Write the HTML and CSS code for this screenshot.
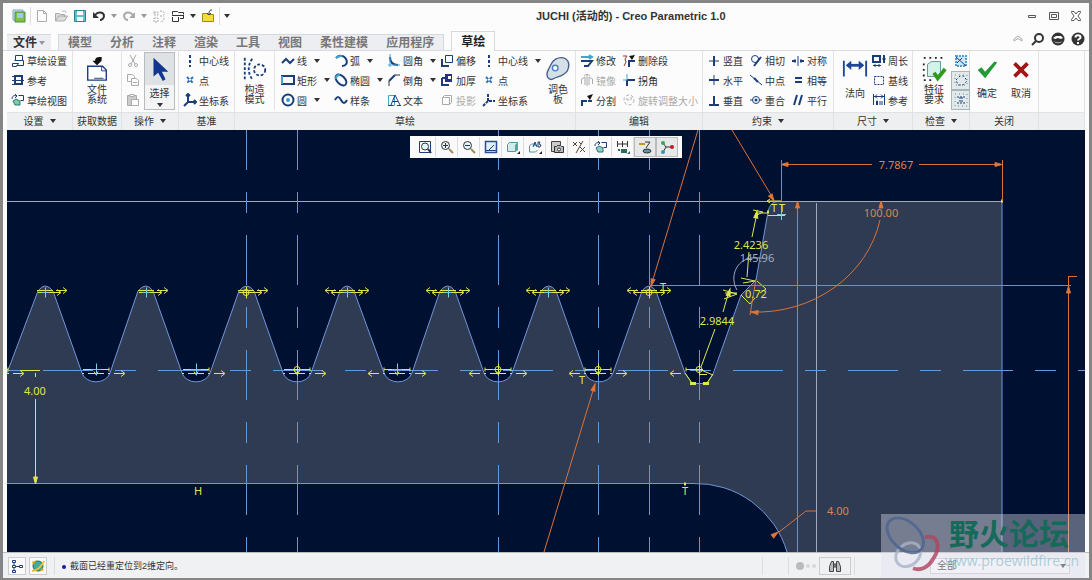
FILE: index.html
```html
<!DOCTYPE html>
<html lang="zh-CN">
<head>
  <meta charset="UTF-8">
  <meta name="viewport" content="width=device-width, initial-scale=1.0">
  <title>JUCHI (活动的) - Creo Parametric 1.0</title>
  <link rel="stylesheet" href="styles.css">
</head>
<body>
  <div class="window">
    <!-- Title bar -->
    <header class="titlebar">
      <div class="quick">
        <button aria-label="Creo"><svg class="ic" viewBox="0 0 14 14"><path fill="#cfe3f5" stroke="#7aa5cf" d="M1 1h10v10H1z"/><path fill="#7fc04a" stroke="#4d8f3a" d="M3 3h10v10H3z"/><path fill="#9fc8ea" d="M5 4h6v5H5z"/></svg></button>
        <i class="vline"></i>
        <button aria-label="新建"><svg class="ic" viewBox="0 0 14 14"><path class="g" d="M2.500 1.500h6l3 3v8h-9zM8.500 1.500v3h3"/></svg></button>
        <button aria-label="打开"><svg class="ic" viewBox="0 0 14 14"><path fill="#ddd" stroke="#aaa" d="M1.500 12V4.500h4l1 1h4V8M1.500 12l3-5h9l-3 5z"/><path class="g" d="M8 3c2-2 4-1 4 1"/></svg></button>
        <button aria-label="保存"><svg class="ic" viewBox="0 0 14 14"><path fill="#5fc0c8" stroke="#2b7f8c" d="M1.500 1.500h11v11h-11z"/><path fill="#fff" d="M4 2h6v4H4zM4 8h6v4H4z"/></svg></button>
        <button aria-label="撤消"><svg class="ic" viewBox="0 0 14 14"><path class="k w2" d="M3 6c3-4 9-3 9 1 0 2-2 4-4 4"/><path fill="#333" d="M1 3v6h6z"/></svg></button>
        <i class="arr dim"></i>
        <button aria-label="重做"><svg class="ic" viewBox="0 0 14 14"><path class="g w2" d="M11 6c-3-4-9-3-9 1 0 2 2 4 4 4"/><path fill="#aaa" d="M13 3v6H7z"/></svg></button>
        <i class="arr dim"></i>
        <button aria-label="重新生成"><svg class="ic" viewBox="0 0 14 14"><path class="g" stroke-dasharray="2 1" d="M2 3h4v3H2zM2 9h4v4H2zM8 2c4 0 5 2 4 4M12 9c0 3-2 4-4 4M8 7h4"/></svg></button>
        <button aria-label="窗口"><svg class="ic" viewBox="0 0 14 14"><path class="k" d="M1.500 5.500v-3h5l1 1h5v2M1 6.500h12M1.500 8v4.500h6V8M9 9.500h3.500V6"/></svg></button>
        <i class="arr"></i>
        <button aria-label="关闭窗口"><svg class="ic" viewBox="0 0 14 14"><path fill="#f3dc3c" stroke="#a08a10" d="M1.500 12.500v-8h4l1 1h6v7z"/><path stroke="#333" fill="none" d="M11 1C8 1 8 3 8 6M6 4l2 2 2-2"/></svg></button>
        <i class="vline"></i>
        <i class="arr more"></i>
      </div>
      <h1>JUCHI (活动的) - Creo Parametric 1.0</h1>
      <div class="winbtns">
        <button aria-label="最小化"><svg class="ic" viewBox="0 0 14 14"><path class="k thin" d="M3.500 6.500h7v2h-7z"/></svg></button>
        <button aria-label="最大化"><svg class="ic" viewBox="0 0 14 14"><path class="k thin" d="M2.500 3.500h9v7h-9zM4.500 5.500h5v3h-5z"/></svg></button>
        <button aria-label="关闭"><svg class="ic" viewBox="0 0 14 14"><path class="k thin" d="M2.500 2.500h2.500l2 2.500 2-2.500h2.500v1L9 7l2.500 3.500v1H9L7 9l-2 2.500H2.500v-1L5 7 2.500 3.500z"/></svg></button>
      </div>
    </header>

    <!-- Tabs -->
    <nav class="tabs">
      <button class="tab file">文件<i class="arr dim"></i></button>
      <div class="tabset">
        <button class="tab">模型</button>
        <button class="tab">分析</button>
        <button class="tab">注释</button>
        <button class="tab">渲染</button>
        <button class="tab">工具</button>
        <button class="tab">视图</button>
        <button class="tab">柔性建模</button>
        <button class="tab">应用程序</button>
      </div>
      <button class="tab active">草绘</button>
      <div class="help">
        <button aria-label="折叠"><svg class="ic" viewBox="0 0 14 14"><path class="g" d="M3 7l4-3 4 3v2L7 6.500 3 9z"/></svg></button>
        <button aria-label="搜索"><svg class="ic" viewBox="0 0 14 14"><circle class="k w2" cx="8" cy="6" r="4"/><path class="k w2" d="M5 9l-4 4"/></svg></button>
        <button aria-label="社区"><svg class="ic" viewBox="0 0 14 14"><circle cx="7" cy="7" r="6.500" fill="#333"/><path fill="#fff" d="M2 6l3-2h5l2 2-2 1-3-1-3 1zM3 9c3 2 5 2 8 0-2 3-6 3-8 0z"/></svg></button>
        <button aria-label="帮助"><svg class="ic" viewBox="0 0 14 14"><circle cx="7" cy="7" r="6.500" fill="#333"/><path stroke="#fff" stroke-width="2" fill="none" d="M4.500 5.500c0-3 5-3 5 0C9.500 7 7 7 7 8.500M7 10v2"/></svg></button>
      </div>
    </nav>

    <!-- Ribbon -->
    <div class="ribbon">
      <section class="group">
        <div class="body">
          <div class="col">
            <button class="item"><svg class="ic" viewBox="0 0 14 14"><path class="n" d="M4.500 1.500h7v5h-7zM3.500 6.500h9v5h-7M1.500 9.500h6l-2 3h-4z"/></svg>草绘设置</button>
            <button class="item"><svg class="ic" viewBox="0 0 14 14"><path class="n w2" d="M4 3h7v8H4z"/><path class="n" d="M1 7.500h12M1 3.500h3M1 11.500h3"/></svg>参考</button>
            <button class="item"><svg class="ic" viewBox="0 0 14 14"><path fill="#7fc8b0" stroke="#2b7f6c" d="M2 8l3-2 4 2v4H4z"/><path class="n" d="M7.500 2.500h5v5h-3M1 6c0-3 2-4 5-3M4 1l2 2-2 2"/></svg>草绘视图</button>
          </div>
        </div>
        <footer>设置<i class="arr"></i></footer>
      </section>

      <section class="group">
        <div class="body center">
          <button class="big"><svg class="bic" viewBox="0 0 28 28"><path stroke="#1c3e78" stroke-width="1.500" d="M4 11h16l4 4v11H4z" fill="#fff"/><path class="n" d="M19 11v5h5M11 24h10"/><path fill="#111" d="M9 5h10l-5 5zM12 5c0-4 3-4 7-4v4z"/></svg><span>文件<br>系统</span></button>
        </div>
        <footer>获取数据</footer>
      </section>

      <section class="group">
        <div class="body">
          <div class="col narrow">
            <button class="item" disabled aria-label="剪切"><svg class="ic" viewBox="0 0 14 14"><path class="g" d="M4 1l5 9M10 1L5 10"/><circle class="g" cx="4" cy="11" r="1.500"/><circle class="g" cx="10" cy="11" r="1.500"/></svg></button>
            <button class="item" disabled aria-label="复制"><svg class="ic" viewBox="0 0 14 14"><path class="g" d="M5 8.500H1.500v-7h5l2 2V5M5.500 5.500h5l2 2v5h-7zM7 9.500h4"/></svg></button>
            <button class="item" disabled aria-label="粘贴"><svg class="ic" viewBox="0 0 14 14"><path fill="#ccc" stroke="#aaa" d="M1.500 2.500h9v10h-9z"/><path fill="#fff" stroke="#aaa" d="M4 1.500h4v2H4zM5.500 6.500h7v6h-7z"/></svg></button>
          </div>
          <button class="big pressed"><svg class="bic" viewBox="0 0 28 28"><path fill="#12358f" d="M7 2v20l5-4 5 9 3-2-4-8h7z"/></svg><span>选择</span><i class="arr"></i></button>
        </div>
        <footer>操作<i class="arr"></i></footer>
      </section>

      <section class="group">
        <div class="body">
          <div class="col">
            <button class="item"><svg class="ic" viewBox="0 0 14 14"><path class="n w2" stroke-dasharray="3 2" d="M7 1v12"/></svg>中心线</button>
            <button class="item"><svg class="ic" viewBox="0 0 14 14"><path class="b w2" stroke-dasharray="3 2" d="M4 4l6 6M10 4l-6 6"/></svg>点</button>
            <button class="item"><svg class="ic" viewBox="0 0 14 14"><path class="n w2" d="M5 1v8h8M5 9l-4 4M3 3l2-2 2 2M11 7l2 2-2 2"/></svg>坐标系</button>
          </div>
        </div>
        <footer>基准</footer>
      </section>

      <section class="group">
        <div class="body">
          <button class="big ruled"><svg class="bic" viewBox="0 0 28 28"><path class="n w2" stroke-dasharray="3 2" d="M3 2v25M11 3c-5 7-5 15 0 22"/><circle class="n w2" stroke-dasharray="3 2" cx="19" cy="15" r="6"/></svg><span>构造<br>模式</span></button>
          <div class="col mid">
            <button class="item"><svg class="ic" viewBox="0 0 14 14"><path class="n w2" d="M1 9l4-4 4 4 4-4"/></svg>线<i class="arr"></i></button>
            <button class="item"><svg class="ic" viewBox="0 0 14 14"><path class="n w2" d="M1 3h12v8H1z"/><path class="c w2" d="M1 11V3"/></svg>矩形<i class="arr"></i></button>
            <button class="item"><svg class="ic" viewBox="0 0 14 14"><circle class="n w2" cx="7" cy="7" r="5.500"/><circle fill="#3aa0c8" cx="7" cy="7" r="2"/></svg>圆<i class="arr"></i></button>
          </div>
          <div class="col mid">
            <button class="item"><svg class="ic" viewBox="0 0 14 14"><path class="n w2" d="M2 4c3-3 8-3 10 1s0 7-4 7"/><path class="c w2" d="M2 4c2-2 4-2 6-2"/></svg>弧<i class="arr"></i></button>
            <button class="item"><svg class="ic" viewBox="0 0 14 14"><ellipse class="n w2" cx="7" cy="7" rx="6.500" ry="4" transform="rotate(45 7 7)"/><path class="c w2" d="M2 6c0-3 1-4 4-4"/></svg>椭圆<i class="arr"></i></button>
            <button class="item"><svg class="ic" viewBox="0 0 14 14"><path class="n w2" d="M1 7c2-4 4-4 6 0s4 4 6 0"/></svg>样条</button>
          </div>
          <div class="col mid">
            <button class="item"><svg class="ic" viewBox="0 0 14 14"><path class="n w2" d="M3 3c0 5 3 8 8 8"/><path class="c" d="M3 0v13M1 11h12"/></svg>圆角<i class="arr"></i></button>
            <button class="item"><svg class="ic" viewBox="0 0 14 14"><path class="n w2" d="M2 8l6-6"/><path class="k" d="M2 13V8M8 2h5"/></svg>倒角<i class="arr"></i></button>
            <button class="item"><svg class="ic" viewBox="0 0 14 14"><path class="c" d="M1.500 2.500h6v10h-6z"/><path class="n" d="M4 12L8 2l5 10M6 8.500h5M1 12.500h5M10 12.500h4"/></svg>文本</button>
          </div>
          <div class="col">
            <button class="item"><svg class="ic" viewBox="0 0 14 14"><path class="n w2" d="M2 5v7h7"/><path class="n" d="M5.500 1.500h7v7h-7z"/></svg>偏移</button>
            <button class="item"><svg class="ic" viewBox="0 0 14 14"><path class="n w2" d="M2 5v7h7M2 5h3"/><path fill="#2a2f80" d="M5 1h7v8H5z"/><path fill="#fff" d="M8 3h3v3H8z"/></svg>加厚</button>
            <button class="item" disabled><svg class="ic" viewBox="0 0 14 14"><path class="g" d="M2.500 4.500h7v7h-7zM2.500 4.500l2-2h7v7l-2 2"/></svg>投影</button>
          </div>
          <div class="col grow">
            <button class="item"><svg class="ic" viewBox="0 0 14 14"><path class="n w2" stroke-dasharray="3 2" d="M7 1v12"/></svg>中心线<i class="arr"></i></button>
            <button class="item"><svg class="ic" viewBox="0 0 14 14"><path class="b w2" stroke-dasharray="3 2" d="M4 4l6 6M10 4l-6 6"/></svg>点</button>
            <button class="item"><svg class="ic" viewBox="0 0 14 14"><path class="n w2" stroke-dasharray="3 1" d="M6 1v7h7M6 8l-5 5"/></svg>坐标系</button>
          </div>
          <button class="big"><svg class="bic" viewBox="0 0 28 28"><path fill="#d5dfe6" stroke="#46618c" stroke-width="1.500" d="M3 23C0 18 4 15 6 10 8 4 14 1 20 2c6 2 7 8 4 14-3 5-9 6-14 8-3 2-5 2-7-1z"/><circle fill="#fff" stroke="#4a80c0" stroke-width="1.500" cx="11" cy="13" r="3"/></svg><span>调色<br>板</span></button>
        </div>
        <footer>草绘</footer>
      </section>

      <section class="group">
        <div class="body">
          <div class="col">
            <button class="item"><svg class="ic" viewBox="0 0 14 14"><path class="n w2" d="M1 7h11L8 12H4"/><path class="c w2" d="M1 3h10M9 1l3 2-3 2"/></svg>修改</button>
            <button class="item" disabled><svg class="ic" viewBox="0 0 14 14"><path class="g" d="M5 12V4L1.500 6v5M9 12V4l3.500 2v5M7 1v12M4 3c1-2 5-2 6 0"/></svg>镜像</button>
            <button class="item"><svg class="ic" viewBox="0 0 14 14"><path class="n w2" d="M2 13V8h5M8 8h4"/><path fill="#111" d="M13 1L7 3l3 4z"/></svg>分割</button>
          </div>
          <div class="col grow">
            <button class="item"><svg class="ic" viewBox="0 0 14 14"><path stroke="#a03030" fill="none" d="M1 2h4L3 5l1 3-2 4"/><path class="n w2" d="M7 13V7h6"/><path fill="#111" d="M13 1L7 2l3 4z"/></svg>删除段</button>
            <button class="item"><svg class="ic" viewBox="0 0 14 14"><path class="n w2" d="M5 7h8M5 7v6"/><path class="c" d="M5 1v6M1 7h4"/></svg>拐角</button>
            <button class="item" disabled><svg class="ic" viewBox="0 0 14 14"><circle class="g" stroke-dasharray="3 2" cx="7" cy="7" r="5"/><path class="g" d="M4 6h2v2M9 4v3"/></svg>旋转调整大小</button>
          </div>
        </div>
        <footer>编辑</footer>
      </section>

      <section class="group">
        <div class="body">
          <div class="col">
            <button class="item"><svg class="ic" viewBox="0 0 14 14"><path class="n" d="M2 7h10"/><path class="n w2" d="M7 2v10"/></svg>竖直</button>
            <button class="item"><svg class="ic" viewBox="0 0 14 14"><path class="n w2" d="M2 7h10"/><path class="n" d="M7 2v10"/></svg>水平</button>
            <button class="item"><svg class="ic" viewBox="0 0 14 14"><path class="n w2" d="M2 12h10M7 3v9"/></svg>垂直</button>
          </div>
          <div class="col">
            <button class="item"><svg class="ic" viewBox="0 0 14 14"><circle class="n" cx="6" cy="5" r="3.500"/><path class="n w2" d="M5 12l7-9"/></svg>相切</button>
            <button class="item"><svg class="ic" viewBox="0 0 14 14"><path class="n" d="M1 2l12 10"/><path class="n w2" d="M5 5l4 4"/></svg>中点</button>
            <button class="item"><svg class="ic" viewBox="0 0 14 14"><circle class="n" cx="7" cy="7" r="3.500"/><path class="n" d="M1 7h3M10 7h3"/><circle cx="7" cy="7" r="1.500" fill="#1c3e78"/></svg>重合</button>
          </div>
          <div class="col">
            <button class="item"><svg class="ic" viewBox="0 0 14 14"><path class="n w2" d="M1 7h4M9 7h4"/><path class="n" d="M7 2v10M4 5v4M10 5v4"/></svg>对称</button>
            <button class="item"><svg class="ic" viewBox="0 0 14 14"><path class="n w2" d="M4 5h7M4 9h7"/></svg>相等</button>
            <button class="item"><svg class="ic" viewBox="0 0 14 14"><path class="n w2" d="M6 2L3 12M11 2L8 12"/></svg>平行</button>
          </div>
        </div>
        <footer>约束<i class="arr"></i></footer>
      </section>

      <section class="group">
        <div class="body">
          <button class="big"><svg class="bic" viewBox="0 0 28 28"><path stroke="#1d4796" stroke-width="2" fill="none" d="M2 5v17M26 5v17"/><path stroke="#1d4796" stroke-width="3" d="M6 10h16"/><path fill="#1d4796" d="M4 10l6-5v10zM24 10l-6-5v10z"/></svg><span>法向</span></button>
          <div class="col grow">
            <button class="item"><svg class="ic" viewBox="0 0 14 14"><path class="n w2" d="M1 2h7v6H1zM12 1v8"/><path class="n" d="M10 5h4M1 11.500h8M3 10v3M7 10v3"/></svg>周长</button>
            <button class="item"><svg class="ic" viewBox="0 0 14 14"><path class="n" stroke-dasharray="2 1" d="M2.500 3.500h9v8h-9z"/></svg>基线</button>
            <button class="item"><svg class="ic" viewBox="0 0 14 14"><path class="n" d="M1.500 1v11M12.500 1v11M2 3.500h10M5 1.500L3 3.500l2 2M9 1.500l2 2-2 2M4.500 12V8h1v4M8 8v4M10 8v4"/></svg>参考</button>
          </div>
        </div>
        <footer>尺寸<i class="arr"></i></footer>
      </section>

      <section class="group">
        <div class="body">
          <button class="big"><svg class="bic" viewBox="0 0 28 28"><path stroke="#222" stroke-width="2" stroke-dasharray="2 4" fill="none" d="M3 2h22M3 8v18h8"/><path fill="#d6f0ea" stroke="#57958f" d="M7 9l4-3h10v12l-4 4H7z"/><path stroke="#2d9a1c" stroke-width="4" fill="none" d="M14 18l4 6 8-10"/></svg><span>特征<br>要求</span></button>
          <div class="col checks">
            <button aria-label="重叠几何"><svg class="ic" viewBox="0 0 14 14"><path stroke="#5a9ccc" stroke-width="2" stroke-dasharray="2 1" fill="#cfe6f5" d="M2 2h10v10H2z"/><path class="n" d="M2 3l10 9M3 9l5-5"/></svg></button>
            <button class="on" aria-label="突出显示开放端"><svg class="ic" viewBox="0 0 14 14"><path class="n" stroke-dasharray="2 2" d="M2 7l4-4h4l3 5-4 4H4z"/><path stroke="#4aa060" stroke-dasharray="1 3" fill="none" d="M1 2h12v10H1z"/></svg></button>
            <button class="on" aria-label="着色封闭环"><svg class="ic" viewBox="0 0 14 14"><path class="n" stroke-dasharray="2 1" d="M3 4h8M3 10h8M6 4v6M8 4v6"/><path stroke="#4aa060" stroke-dasharray="1 3" fill="none" d="M1 1h12v12H1z"/></svg></button>
          </div>
        </div>
        <footer>检查<i class="arr"></i></footer>
      </section>

      <section class="group">
        <div class="body center">
          <button class="big"><svg class="bic" viewBox="0 0 28 28"><path fill="#219a35" d="M4 15l4-3 4 5L22 6l3 1-13 17z"/></svg><span>确定</span></button>
          <button class="big"><svg class="bic" viewBox="0 0 28 28"><path stroke="#a31515" stroke-width="4" fill="none" d="M7 8l14 14M21 8L7 22"/></svg><span>取消</span></button>
        </div>
        <footer>关闭</footer>
      </section>

      <section class="group">
        <div class="body"></div>
        <footer></footer>
      </section>
    </div>

    <!-- Drawing area -->
    <main class="canvas">
      <svg class="sketch" viewBox="7 130 1078 422" preserveAspectRatio="xMinYMin slice">
        <defs>
          <!-- right and left pointing constraint arrows -->
          <g id="ar"><path d="M0 0h10M7 -3l4 3-4 3"/></g>
          <g id="al"><path d="M0 0h-10M-7 -3l-4 3 4 3"/></g>
          <g id="peak"><path d="M-7 0H7M-7 2H7"/><path class="cross" d="M.5-3v10M-4 2H4"/><use href="#ar" x="11"/><use href="#ar" x="5" y="2"/><path class="dots" d="M-8 0h2M6 0h2"/></g>
          <g id="peak-left"><use href="#al" x="-11"/><use href="#al" x="-5" y="2"/></g>
          <g id="valley"><path d="M-13 0h26M-8 4H8M-2 2l2 3 2-3M13-2v4"/><path class="cross" d="M.5-6v12M-5 0H5"/><use href="#ar" x="18" y="4"/><path class="dots" d="M-14 4h2M12 4h2"/></g>
          <g id="valley-left"><use href="#al" x="-18" y="4"/><path d="M-13-2v4"/></g>
          <g id="ring"><circle r="3"/><path d="M.5-6v12M-4 0h8"/></g>
          <path id="head" d="M0 0l-2 7h4z"/>
        </defs>

        <!-- closed section -->
        <path class="section" d="M0 392L7 373L38 291Q45 281 53 291L82 373A14.500 12 0 0 0 110 373L138 291Q146 281 153 291L182 373A14.500 12 0 0 0 210 373L239 291Q247 281 254 291L283 373A14.500 12 0 0 0 311 373L340 291Q347 281 354 291L384 373A14.500 12 0 0 0 412 373L440 291Q448 281 455 291L484 373A14.500 12 0 0 0 512 373L541 291Q549 281 556 291L585 373A14.500 12 0 0 0 613 373L642 291Q649 281 656 291L685 373L692 383.500H707L713 374L741 295L756 280L768 212Q770 202 777 201.500H1002V570H792L787 552A95 95 0 0 0 693 483.500H0z"/>
        <path class="datum" d="M7 201.500H1002M816.500 203V552"/>

        <!-- centre lines -->
        <g class="centre">
          <path d="M246.500 120V552M297.500 120V552M498.500 120V552M598.500 120V552M649.500 120V552M699.500 120V552"/>
          <path d="M-72 370.500H1085"/>
        </g>

        <!-- constraints -->
        <g class="yellow">
          <use href="#peak" x="45" y="290.500"/><use href="#peak" x="146" y="290.500"/><use href="#peak" x="246" y="290.500"/><use href="#peak" x="347" y="290.500"/><use href="#peak" x="448" y="290.500"/><use href="#peak" x="548" y="290.500"/><use href="#peak" x="649" y="290.500"/>
          <use href="#peak-left" x="347" y="290.500"/><use href="#peak-left" x="448" y="290.500"/><use href="#peak-left" x="548" y="290.500"/><use href="#peak-left" x="649" y="290.500"/>
          <use href="#valley" x="-5" y="369.500"/><use href="#valley" x="96" y="369.500"/><use href="#valley" x="196" y="369.500"/><use href="#valley" x="297" y="369.500"/><use href="#valley" x="397" y="369.500"/><use href="#valley" x="498" y="369.500"/><use href="#valley" x="598" y="369.500"/>
          <use href="#valley-left" x="397" y="369.500"/><use href="#valley-left" x="498" y="369.500"/><use href="#valley-left" x="598" y="369.500"/><use href="#valley-left" x="699" y="369.500"/>
          <use href="#ring" x="246" y="292.500"/><use href="#ring" x="649" y="292.500"/><use href="#ring" x="297" y="369.500"/><use href="#ring" x="498" y="369.500"/><use href="#ring" x="598" y="369.500"/><use href="#ring" x="699" y="369.500"/>
          <path d="M686 369.500h14M699 374.500h8M685 373l7 10M713 374l-6 9M701 370l12 5"/>
          <path class="dots" d="M690 383.500h6M703 383.500h6"/>
          <!-- 4.00 height -->
          <path d="M21 370.500h19M35.500 373v4M35.500 399v84"/>
          <use class="tip" href="#head" transform="translate(35.500 484) rotate(180)"/>
          <!-- slanted lengths -->
          <path d="M701 367l14-38M723 312l6-21M723 290l14 4-13 5M725 293h12"/>
          <path d="M757 213l-5 24M749 252l-2 25M753 210l10 2-8 4M757 213h10M741 278l14 3-12 2"/>
          <path d="M741 295l9 9 5-6M757 281l9 8-6 4M768 215.500h17"/>
          <path d="M768 201h14M770 199l-3 2 3 2"/>
          <use class="tip" href="#head" transform="translate(730 289) rotate(15)"/>
          <use class="tip" href="#head" transform="translate(757 211) rotate(10)"/>
          <path class="dots" d="M684 484h2M1001 201h2M767 212h2"/>
        </g>
        <path class="cyan" d="M781.500 205v15M777 214.500h9"/>

        <!-- dimensions -->
        <g class="orange">
          <path d="M698 130L651 286M732 130l42 70M544 552l51-168"/>
          <path d="M781.500 160v40M1002.500 160v41M782 164.500h90M919 164.500h83"/>
          <path d="M650 285.500h421M797.500 201v351M1068.500 276v276M1068 276.500h9"/>
          <path d="M881 202v6M880 220A126 115 0 0 1 751 312M756 279l-6 36"/>
          <path d="M779 532l27-21h10"/>
          <use class="tip" href="#head" transform="translate(651 286) rotate(197)"/>
          <use class="tip" href="#head" transform="translate(774 201) rotate(149)"/>
          <use class="tip" href="#head" transform="translate(595 384) rotate(17)"/>
          <use class="tip" href="#head" transform="translate(781 164.500) rotate(270)"/>
          <use class="tip" href="#head" transform="translate(1002 164.500) rotate(90)"/>
          <use class="tip" href="#head" x="797.500" y="201"/>
          <use class="tip" href="#head" x="881" y="201"/>
          <use class="tip" href="#head" x="1068.500" y="286"/>
          <use class="tip" href="#head" transform="translate(751 312) rotate(275)"/>
          <use class="tip" href="#head" transform="translate(778 532) rotate(52)"/>
        </g>
        <path class="ref" d="M763 258h-12C737 260 729 276 737 290M816.500 203v6"/>

        <g class="dims">
          <text x="35" y="395">4.00</text>
          <text x="198" y="495">H</text>
          <text x="685" y="495">T</text>
          <text x="582" y="384">T</text>
          <text x="663" y="291">T</text>
          <text x="774" y="212">T</text>
          <text x="782" y="212">T</text>
          <text x="717" y="325">2.9844</text>
          <text x="751" y="249">2.4236</text>
          <text x="756" y="298">0.72</text>
          <text class="t-ref" x="757" y="262">145.96</text>
          <text class="t-orange" x="896" y="169">7.7867</text>
          <text class="t-orange" x="881" y="217">100.00</text>
          <text class="t-orange" x="838" y="515">4.00</text>
        </g>
      </svg>

      <div class="viewbar">
        <button aria-label="重新调整"><svg class="ic" viewBox="0 0 14 14"><path class="n" d="M1.500 1.500h11v11h-11z"/><circle stroke="#333" fill="#dff" cx="7" cy="6.500" r="3.500"/><path class="k w2" d="M10 9l3 4"/></svg></button>
        <button aria-label="放大"><svg class="ic" viewBox="0 0 14 14"><circle stroke="#333" fill="#e4f4ff" cx="5.500" cy="5.500" r="4"/><path stroke="#a08a50" stroke-width="2" d="M9 9l4 4"/><path class="k" d="M3 5.500h5M5.500 3v5"/></svg></button>
        <button aria-label="缩小"><svg class="ic" viewBox="0 0 14 14"><circle stroke="#333" fill="#e4f4ff" cx="5.500" cy="5.500" r="4"/><path stroke="#a08a50" stroke-width="2" d="M9 9l4 4"/><path class="k" d="M3 5.500h5"/></svg></button>
        <button aria-label="重画"><svg class="ic" viewBox="0 0 14 14"><path stroke="#2a4f98" fill="#dfeeff" stroke-width="1.500" d="M1.500 1.500h11v11h-11z"/><path class="n" d="M2 10.500h10M10 5l-5 5"/></svg></button>
        <button aria-label="显示样式"><svg class="ic" viewBox="0 0 14 14"><path fill="#cdeeea" stroke="#4f9a96" d="M1.500 4.500l2-2h8v7l-2 2h-8z"/><path fill="#4fa9a0" d="M9 5l3-3v8l-3 2z"/><path fill="#222" d="M14 11v3h-3z"/></svg></button>
        <button aria-label="已保存方向"><svg class="ic" viewBox="0 0 14 14"><path stroke="#4f9a96" fill="none" d="M1.500 6l2-2h3M1.500 6v6h6l2-2"/><path class="n" d="M5 7l2-5 2 5M6 5h2M10 7V2h2l-1 2 2 1-1 2z"/><path fill="#222" d="M14 11v3h-3z"/></svg></button>
        <button aria-label="视图管理器"><svg class="ic" viewBox="0 0 14 14"><path stroke="#444" fill="#ccc" d="M1.500 1.500h9v10h-9z"/><path stroke="#333" fill="#bbb" d="M4.500 6.500h2l1-1h3l1 1h2v6h-9z"/><circle stroke="#333" fill="#fff" cx="9" cy="9.500" r="1.500"/></svg></button>
        <button aria-label="基准显示"><svg class="ic" viewBox="0 0 14 14"><path stroke="#5a4330" fill="none" d="M1 2l4 4M5 2L1 6M11 1L4 13M8 7l5 5M13 7l-5 5M7 2l2 2"/></svg></button>
        <button aria-label="草绘视图"><svg class="ic" viewBox="0 0 14 14"><path fill="#8fd0c0" stroke="#2b6f7c" d="M2 8l3-2 4 2v4H4z"/><path class="n" d="M7.500 2.500h5v5h-3M1 6c0-3 2-4 5-3M4 1l2 2-2 2"/></svg></button>
        <button aria-label="草绘器显示"><svg class="ic" viewBox="0 0 14 14"><path class="k" d="M1.500 1v6M6.500 1v6M11.500 1v6M2 4h9"/><path fill="#2c6a60" d="M5 9h6v4H5zM2 9h2v2H2zM14 11v3h-3z"/></svg></button>
        <button class="on" aria-label="注释显示"><svg class="ic" viewBox="0 0 14 14"><path stroke="#c09a20" stroke-width="2" fill="none" d="M1 4h6"/><path class="k" d="M7 2h5L8 8"/><ellipse fill="#5a9a98" stroke="#333" cx="9" cy="11" rx="4" ry="2"/></svg></button>
        <button class="on" aria-label="旋转中心"><svg class="ic" viewBox="0 0 14 14"><path class="k" d="M3 3l3 4M6 7h6M6 7l-3 5"/><circle fill="#2fae4a" cx="3" cy="3" r="2"/><circle fill="#c21818" cx="12" cy="7" r="2"/><circle fill="#2f9aae" cx="3" cy="12" r="2"/></svg></button>
      </div>
    </main>

    <!-- Status bar -->
    <footer class="status">
      <button class="sbtn" aria-label="导航器"><svg class="ic" viewBox="0 0 14 14"><path class="n" d="M2.500 1.500h3v2h-3zM2.500 6.500h3v2h-3zM2.500 11.500h3v2h-3zM9.500 6.500h3v2h-3zM4 3v3M4 9v2M6 7.500h3"/></svg></button>
      <button class="sbtn" aria-label="浏览器"><svg class="ic" viewBox="0 0 14 14"><circle fill="#3fae9e" stroke="#1f6f5e" cx="7" cy="7" r="5"/><path fill="#e0a51c" d="M1 3l5-2-4 5zM13 11l-5 2 3-4z"/><path stroke="#f0c030" stroke-width="2" fill="none" d="M1 12c5 0 10-5 12-10"/></svg></button>
      <i class="vline"></i>
      <p class="msg">截面已经重定位到2维定向。</p>
      <i class="vline"></i>
      <i class="vline gap"></i>
      <svg class="lamp" viewBox="0 0 20 10"><circle fill="#bbb" cx="4" cy="5" r="4"/><circle fill="#d8d8d8" cx="12" cy="5" r="2"/><circle fill="#d8d8d8" cx="18" cy="5" r="2"/></svg>
      <button class="find" aria-label="查找"><svg class="ic" viewBox="0 0 14 14"><path fill="#bbb" stroke="#444" d="M1.500 12.500v-5l2-5h2v10zM8.500 12.500v-10h2l2 5v5zM6 5h2v3H6z"/></svg></button>
      <i class="vline"></i>
      <div class="filter">
        <select aria-label="选择过滤器"><option>全部</option></select>
        <i class="arr"></i>
      </div>
    </footer>

    <div class="mark">
      <svg class="logo" viewBox="0 0 62 62"><g fill="none"><ellipse stroke="#a9b3c8" stroke-width="3" cx="25" cy="41" rx="11" ry="14" transform="rotate(50 25 41)"/><ellipse stroke="#4c6590" stroke-width="3" cx="22" cy="21" rx="22" ry="14" transform="rotate(42 22 21)"/><path stroke="#b04560" stroke-width="4" d="M42 23c14-4 17 10 9 22-5 9-13 13-21 10"/></g></svg>
      <div class="words"><strong>野火论坛</strong><span>www.proewildfire.cn</span></div>
    </div>
  </div>
</body>
</html>
```
FILE: styles.css
```css
* {
  box-sizing: border-box;
}

body {
  margin: 0;
  background: #858585;
  font-family: "Liberation Sans", "Noto Sans CJK SC", sans-serif;
  font-size: 10px;
  color: #333;
}

.window {
  position: relative;
  display: flex;
  flex-direction: column;
  height: 100vh;
  border: solid #858585;
  border-width: 3px 3px 2px 3px;
  background: #fcfcfd;
}

button {
  display: flex;
  align-items: center;
  justify-content: center;
  margin: 0;
  padding: 0;
  border: 0;
  background: none;
  font: inherit;
  color: inherit;
  white-space: nowrap;
}

button:disabled {
  color: #aaa;
}

/* Icons */
.ic {
  width: 14px;
  height: 14px;
  flex: none;
}

.bic {
  width: 26px;
  height: 28px;
  flex: none;
}

.n, .k, .g, .c, .b {
  fill: none;
  stroke-width: 1;
}

.n { stroke: #1c3e78; }
.k { stroke: #333; }
.g { stroke: #aaa; }
.c { stroke: #45a5c8; }
.b { stroke: #2a6fb0; }
.w2 { stroke-width: 2; }
.thin { stroke: #555; }

.arr {
  flex: none;
  border: 3px solid transparent;
  border-top: 4px solid #333;
  border-bottom: 0;
  margin-left: 6px;
}

.arr.dim {
  border-top-color: #999;
  margin-left: 2px;
}

.vline {
  width: 1px;
  height: 18px;
  background: #ddd;
}

/* Title bar */
.titlebar {
  display: flex;
  align-items: center;
  height: 28px;
  flex: none;
  padding: 0 6px 2px 9px;
}

.quick {
  display: flex;
  align-items: center;
  gap: 5px;
}

.quick .arr {
  margin-left: 0;
}

.quick .vline {
  margin: 0 -1px;
}

.titlebar h1 {
  flex: 1;
  margin: 0;
  font-size: 11px;
  line-height: 16px;
  padding-left: 306px;
  white-space: nowrap;
}

.winbtns {
  display: flex;
  gap: 8px;
}

/* Tabs */
.tabs {
  display: flex;
  align-items: flex-end;
  height: 20px;
  flex: none;
  padding: 0 4px;
  border-bottom: 1px solid #d9dbde;
}

.tabset {
  display: flex;
  margin: 0 7px;
  border: solid #d5d8dc;
  border-width: 0 1px;
}

.tab {
  height: 16px;
  padding: 0 9px;
  border-top: 1px solid #d5d8dc;
  background: #eceef1;
  font-size: 12px;
  font-weight: bold;
  line-height: 14px;
  color: #777;
}

.tab.file {
  padding: 0 6px;
  color: #333;
}

.tab.active {
  height: 20px;
  margin-bottom: -1px;
  border: 1px solid #d5d8dc;
  border-bottom: 0;
  background: #fcfcfd;
  color: #222;
}

.help {
  display: flex;
  gap: 6px;
  margin-left: auto;
  padding-bottom: 4px;
}

/* Ribbon */
.ribbon {
  display: grid;
  grid-template-columns: 66fr 49fr 57fr 56fr 341fr 127fr 131fr 79fr 57fr 69fr 46fr;
  height: 79px;
  flex: none;
  margin: 0 4px;
}

.group {
  display: flex;
  flex-direction: column;
  min-width: 0;
  border-right: 1px solid #e0e2e5;
}

.group .body {
  display: flex;
  flex: 1;
  padding: 0 3px 2px 4px;
}

.group .body.center {
  justify-content: center;
  padding: 0;
}

.group footer {
  display: flex;
  align-items: center;
  justify-content: center;
  height: 18px;
  padding-bottom: 2px;
  background: #edeff1;
  border-top: 1px solid #e0e2e5;
}

.col {
  display: grid;
  grid-template-rows: repeat(3, 1fr);
  width: 42px;
  flex: none;
}

.col.mid {
  width: 53px;
}

.col.narrow {
  width: 18px;
}

.col.grow {
  flex: 1;
  width: auto;
}

.item {
  justify-content: flex-start;
  gap: 2px;
}

.item .arr {
  margin-left: 5px;
}

.big {
  flex-direction: column;
  justify-content: flex-start;
  width: 34px;
  flex: none;
  padding-top: 4px;
  line-height: 10px;
}

.big span {
  display: flex;
  align-items: center;
  min-height: 20px;
  padding-top: 2px;
}

.big.pressed {
  height: 58px;
  width: 31px;
  margin-top: 1px;
  padding-top: 2px;
  border: 1px solid #bbb;
  background: linear-gradient(#dfe2e5 0, #dfe2e5 32px, #f3f4f5 32px);
}

.big.pressed .arr {
  margin-left: 0;
}

.big.ruled {
  width: 40px;
  margin-left: -4px;
  margin-right: 6px;
  border-right: 1px solid #e4e4e4;
}

.checks {
  width: 19px;
}

.checks .on {
  border: 1px solid #aab4bd;
  background: #e3e8ec;
}

/* Drawing area */
.canvas {
  position: relative;
  flex: 1;
  min-height: 0;
  margin: 0 4px;
  background: #001030;
  overflow: hidden;
}

.sketch {
  display: block;
  width: 100%;
  height: 100%;
}

.section {
  fill: #2f3b52;
  stroke: #6f97da;
}

.datum, .centre, .ref, .cyan {
  fill: none;
}

.datum, .ref {
  stroke: #a3a9bd;
}

.centre {
  stroke: #6498d8;
  stroke-dasharray: 50 22 21 22;
}

.cyan, .cross {
  stroke: #7ccbe0;
}

.yellow {
  fill: none;
  stroke: #dfe74c;
}

.yellow .dots {
  stroke-width: 3;
}

.yellow .tip {
  fill: #dfe74c;
}

.orange {
  fill: none;
  stroke: #d8733a;
}

.orange .tip {
  fill: #e07838;
}

.dims {
  fill: #dfe74c;
  font-family: "Noto Sans", sans-serif;
  font-size: 11px;
  text-anchor: middle;
}

.dims .t-orange {
  fill: #dc8450;
}

.dims .t-ref {
  fill: #a9adbd;
}

/* Floating view toolbar */
.viewbar {
  position: absolute;
  top: 6px;
  left: 50%;
  display: flex;
  height: 22px;
  padding: 1px 4px;
  background: #fafafa;
  transform: translateX(-50%);
}

.viewbar button {
  width: 22px;
  border-right: 1px solid #ddd;
}

.viewbar .on {
  border: 1px solid #bbb;
  background: #e6e8ea;
}

/* Status bar */
.status {
  display: flex;
  align-items: center;
  gap: 3px;
  height: 26px;
  flex: none;
  padding: 0 19px 0 5px;
  border-top: 1px solid #bbb;
  background: #f0f1f3;
}

.sbtn {
  width: 18px;
  height: 18px;
  border: 1px solid #ccc;
  background: #fafafa;
}

.sbtn + .vline {
  margin-left: 4px;
}

.msg {
  flex: 1;
  margin: 0 0 0 4px;
  font-size: 9px;
}

.msg::before {
  content: "";
  display: inline-block;
  width: 4px;
  height: 4px;
  margin-right: 4px;
  border-radius: 50%;
  background: #1a1aa8;
  vertical-align: middle;
}

.vline.gap {
  margin: 0 4px 0 22px;
}

.lamp {
  width: 20px;
  height: 10px;
}

.find {
  width: 32px;
  height: 18px;
  border: 1px solid #ccc;
}

.filter {
  display: flex;
  align-items: center;
  width: 140px;
  height: 16px;
  margin-left: 72px;
  padding-right: 3px;
  border: 1px solid #ccc;
  background: #fafafa;
}

.filter select {
  flex: 1;
  padding: 0 6px;
  border: 0;
  background: none;
  appearance: none;
  font: inherit;
  color: #333;
}

/* Forum mark over the corner of the window */
.mark {
  position: absolute;
  right: 4px;
  bottom: 0;
  display: flex;
  width: 204px;
  height: 64px;
  padding: 1px 0 0 2px;
  background: rgba(225, 226, 240, 0.4);
  pointer-events: none;
}

.mark .logo {
  width: 62px;
  height: 60px;
  flex: none;
  opacity: 0.8;
}

.words {
  display: flex;
  flex-direction: column;
  white-space: nowrap;
}

.words strong {
  padding-left: 4px;
  font-family: "Noto Sans CJK SC", sans-serif;
  font-size: 30px;
  line-height: 34px;
  color: #17695a;
}

.words span {
  font-family: "Open Sans", sans-serif;
  font-size: 14px;
  line-height: 24px;
  color: rgba(140, 190, 200, 0.7);
}
```
